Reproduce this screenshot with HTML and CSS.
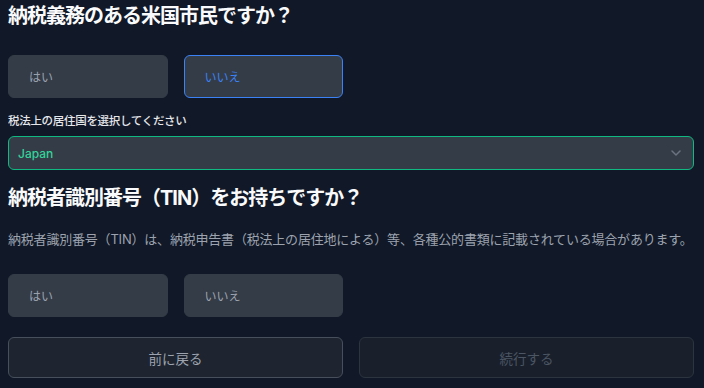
FILE: index.html
```html
<!DOCTYPE html>
<html lang="ja">
<head>
<meta charset="utf-8">
<link rel="stylesheet" href="styles.css">
</head>
<body>
<main class="page">
  <h1 class="title">納税義務のある米国市民ですか？</h1>
  <div class="grid4 row1">
    <button class="opt">はい</button>
    <button class="opt selected">いいえ</button>
  </div>
  <label class="label">税法上の居住国を選択してください</label>
  <div class="select">
    <span class="select-value">Japan</span>
    <svg class="chev" width="10" height="6" viewBox="0 0 10 6"><path d="M1 1 L5 5 L9 1" fill="none" stroke="#6b7280" stroke-width="1.5" stroke-linecap="round" stroke-linejoin="round"/></svg>
  </div>
  <h2 class="title title2">納税者識別番号（TIN）をお持ちですか？</h2>
  <p class="desc">納税者識別番号（TIN）は、納税申告書（税法上の居住地による）等、各種公的書類に記載されている場合があります。</p>
  <div class="grid4 row2">
    <button class="opt">はい</button>
    <button class="opt">いいえ</button>
  </div>
  <div class="nav">
    <button class="btn back">前に戻る</button>
    <button class="btn next">続行する</button>
  </div>
</main>
</body>
</html>
```
FILE: styles.css
```css
html, body {
  margin: 0;
  padding: 0;
  background: #111827;
}
body {
  font-family: "Inter", "Noto Sans CJK JP", sans-serif;
  color: #f3f4f6;
}
.page {
  width: 686px;
  padding: 2px 10px 0 8px;
  display: flex;
  flex-direction: column;
}
.title {
  margin: 0;
  font-size: 20px;
  line-height: 28px;
  font-weight: 700;
  color: #f9fafb;
  letter-spacing: -1px;
}
.grid4 {
  display: grid;
  grid-template-columns: repeat(4, 1fr);
  gap: 16px;
}
.row1 { margin-top: 25px; }
.row2 { margin-top: 25px; }
.opt {
  height: 43px;
  background: #343c48;
  border: 1px solid #343c48;
  border-radius: 6px;
  text-align: left;
  padding: 0 0 0 20px;
  font-family: inherit;
  font-size: 12px;
  color: #9ca3af;
}
.opt.selected {
  border-color: #3b82f6;
  color: #3b82f6;
}
.label {
  margin-top: 15px;
  font-size: 11.5px;
  line-height: 16px;
  font-weight: 500;
  color: #e5e7eb;
  letter-spacing: -0.3px;
}
.select {
  margin-top: 7px;
  height: 34px;
  box-sizing: border-box;
  background: #343c48;
  border: 1px solid #10b981;
  border-radius: 6px;
  display: flex;
  align-items: center;
  justify-content: space-between;
  padding: 0 12px 0 9px;
}
.select-value {
  font-size: 12px;
  color: #34d399;
  font-weight: 500;
}
.title2 { margin-top: 14px; }
.desc {
  margin: 17px 0 0;
  font-size: 13px;
  line-height: 20px;
  color: #9ca3af;
  letter-spacing: -0.2px;
}
.nav {
  margin-top: 20px;
  display: grid;
  grid-template-columns: 1fr 1fr;
  gap: 16px;
}
.btn {
  height: 41px;
  border-radius: 6px;
  font-family: inherit;
  font-size: 13.5px;
  font-weight: 400;
}
.back {
  background: #1e2530;
  border: 1px solid #474f5c;
  color: #9ca3af;
}
.next {
  background: #19202b;
  border: 1px solid #2c3440;
  color: #4b5563;
}
```
